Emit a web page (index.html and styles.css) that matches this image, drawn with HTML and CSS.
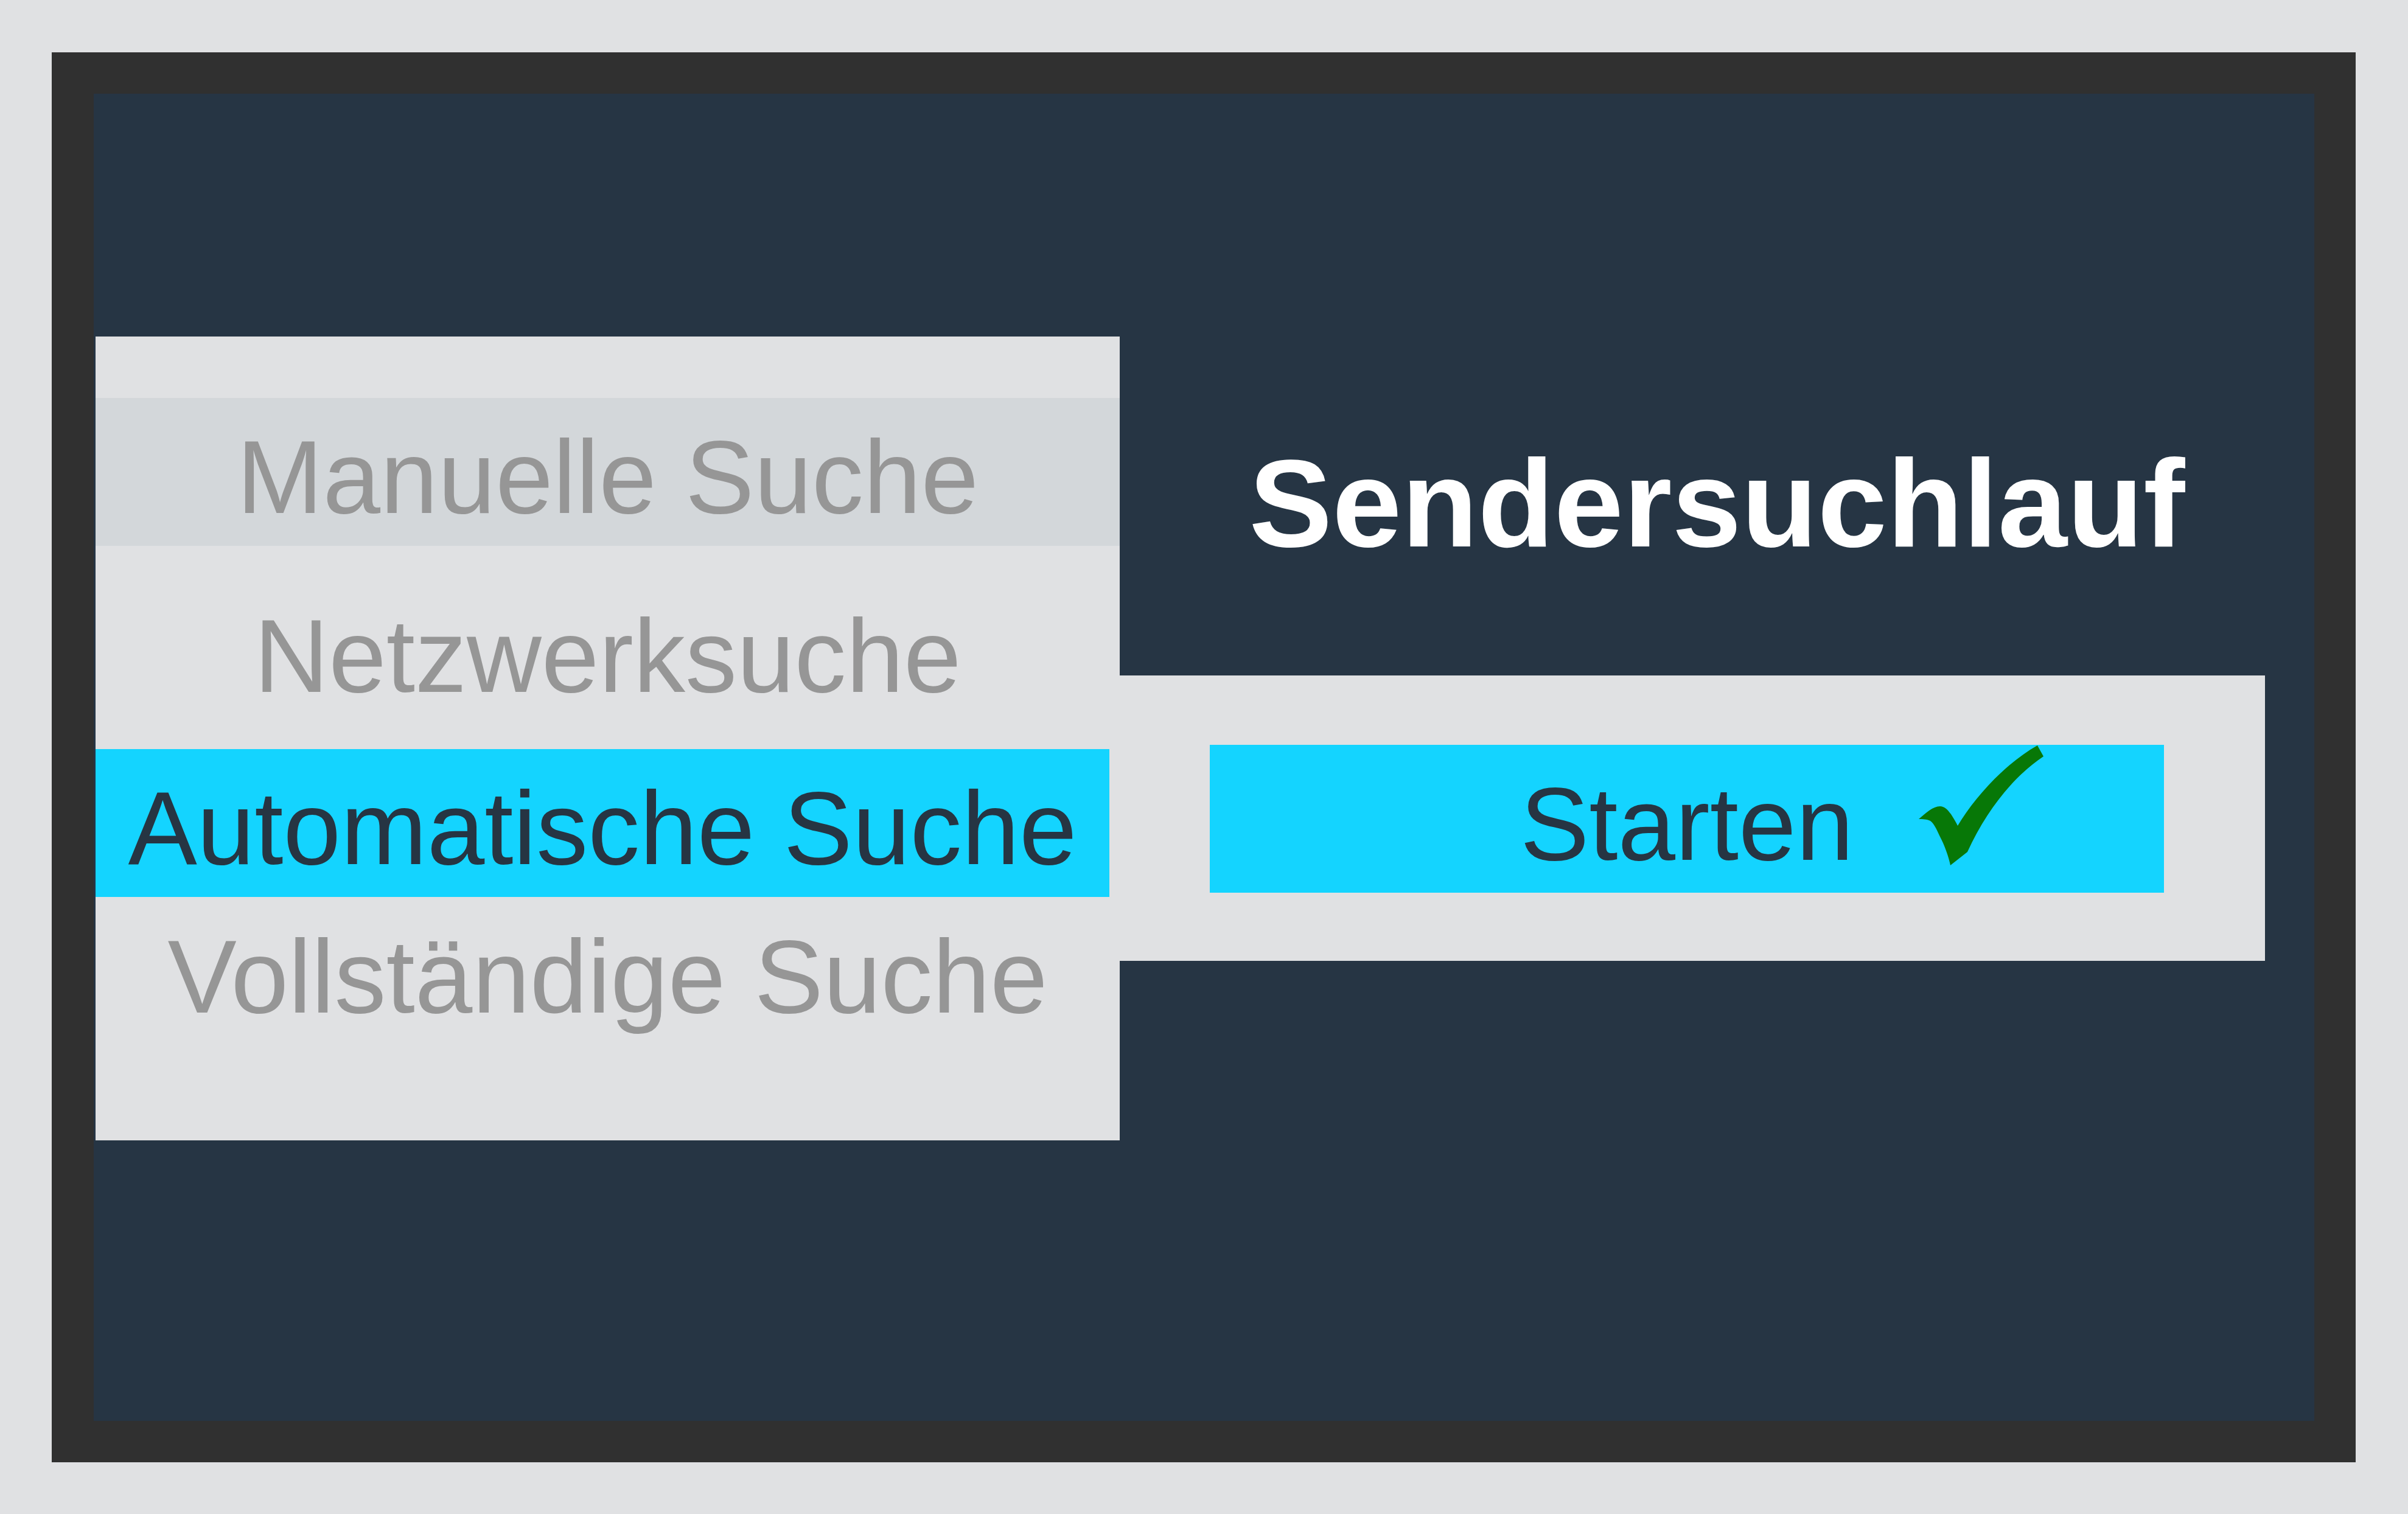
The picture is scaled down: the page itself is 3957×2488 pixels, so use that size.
FILE: index.html
```html
<!DOCTYPE html>
<html lang="de">
<head>
<meta charset="utf-8">
<title>Sendersuchlauf</title>
<link rel="stylesheet" href="styles.css">
</head>
<body>
<div class="frame">
  <ul class="menu">
    <li class="item item-hover">Manuelle Suche</li>
    <li class="item item-2">Netzwerksuche</li>
    <li class="item item-active">Automatische Suche</li>
    <li class="item item-4">Vollständige Suche</li>
  </ul>
  <div class="side">
    <h1 class="title">Sendersuchlauf</h1>
    <div class="action-panel">
      <div class="start-btn">Starten
        <svg class="check" viewBox="0 0 215 205" xmlns="http://www.w3.org/2000/svg">
          <path d="M3,126 C15,116 26,105 38,105 C45,105 50,110 56,118 C60,124 64,131 67,137 C95,90 145,35 198,5 L208,23 C160,55 115,110 83,180 L55,202 C52,188 46,170 37,153 C32,142 27,132 22,129 C16,126 10,126 3,126 Z" fill="#077807"/>
        </svg>
      </div>
    </div>
  </div>
</div>
</body>
</html>
```
FILE: styles.css
```css
html, body {
  margin: 0;
  background: #e0e1e3;
}
body {
  box-sizing: border-box;
  width: 3957px;
  height: 2488px;
  padding: 86px 0 0 85px;
  overflow: hidden;
  font-family: "Liberation Sans", Arial, sans-serif;
}
.frame {
  box-sizing: border-box;
  width: 3786px;
  height: 2317px;
  border: 68px solid #303030;
  border-left-width: 69px;
  background: #263544;
  display: flex;
  align-items: flex-start;
}
.menu {
  list-style: none;
  margin: 399px 0 0 3px;
  padding: 101px 0 156px;
  width: 1683px;
  background: #e0e1e3;
  display: flex;
  flex-direction: column;
}
.item {
  box-sizing: border-box;
  height: 243px;
  padding-top: 16px;
  display: flex;
  align-items: center;
  justify-content: center;
  font-size: 170px;
  line-height: 1;
  color: #969696;
  white-space: nowrap;
}
.item-hover {
  background: #d3d7da;
}
.item-2 {
  margin-top: 51px;
}
.item-active {
  margin-top: 40px;
  margin-right: 17px;
  background: #14d4ff;
  color: #263543;
}
.item-4 {
  margin-top: 1px;
}
.side {
  flex: 1;
  padding-top: 570px;
  display: flex;
  flex-direction: column;
}
.title {
  margin: 0;
  height: 205px;
  font-size: 205px;
  line-height: 1;
  font-weight: 700;
  color: #ffffff;
  text-align: center;
  white-space: nowrap;
}
.action-panel {
  box-sizing: border-box;
  margin-top: 181px;
  width: 1882px;
  height: 469px;
  padding: 114px 0 0 148px;
  background: #e0e1e3;
}
.start-btn {
  position: relative;
  box-sizing: border-box;
  width: 1568px;
  height: 243px;
  padding-top: 16px;
  display: flex;
  align-items: center;
  justify-content: center;
  background: #14d4ff;
  color: #263543;
  font-size: 170px;
  line-height: 1;
}
.check {
  position: absolute;
  left: 1162px;
  top: -4px;
  width: 215px;
  height: 205px;
}
```
